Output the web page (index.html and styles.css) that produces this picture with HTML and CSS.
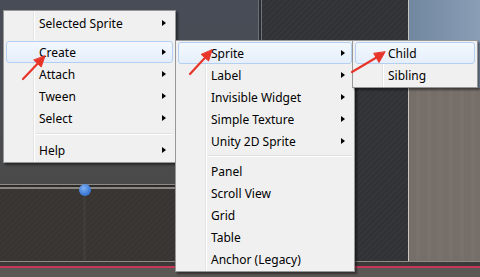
FILE: index.html
```html
<!DOCTYPE html>
<html lang="en">
<head>
    <meta charset="UTF-8">
    <meta name="viewport" content="width=device-width, initial-scale=1.0">
    <title>NGUI Context Menu</title>
    <link rel="stylesheet" href="styles.css">
</head>
<body>

    <div class="scene">

        <!-- Editor background -->
        <div class="upper">
            <div class="editor">
                <div class="scene-view">
                    <div class="scene-top"></div>
                    <div class="scene-rule"></div>
                    <div class="scene-floor">
                        <span class="handle"></span>
                    </div>
                </div>
                <div class="divider"></div>
                <div class="dark-panel"></div>
            </div>
            <div class="side">
                <div class="sky"></div>
                <div class="ground"></div>
            </div>
        </div>
        <div class="timeline">
            <div class="timeline-line"></div>
            <div class="timeline-red"></div>
        </div>

        <!-- Context menu -->
        <div class="menu menu-main">
            <div class="item sub">Selected Sprite</div>
            <div class="gap"></div>
            <div class="item sub active">Create</div>
            <div class="item sub">Attach</div>
            <div class="item sub">Tween</div>
            <div class="item sub">Select</div>
            <div class="sep wide"></div>
            <div class="item sub">Help</div>
        </div>

        <!-- Create submenu -->
        <div class="menu menu-create">
            <div class="item sub active">Sprite</div>
            <div class="item sub">Label</div>
            <div class="item sub">Invisible Widget</div>
            <div class="item sub">Simple Texture</div>
            <div class="item sub">Unity 2D Sprite</div>
            <div class="sep"></div>
            <div class="item">Panel</div>
            <div class="item">Scroll View</div>
            <div class="item">Grid</div>
            <div class="item">Table</div>
            <div class="item">Anchor (Legacy)</div>
        </div>

        <!-- Sprite submenu -->
        <div class="menu menu-sprite">
            <div class="item active">Child</div>
            <div class="item">Sibling</div>
        </div>

        <!-- Red annotation arrows -->
        <svg class="marks" width="480" height="277" viewBox="0 0 480 277">
            <g stroke="#e8352a" stroke-width="2.2" stroke-linecap="round" stroke-linejoin="round" fill="#e8352a">
                <line x1="23" y1="79" x2="38" y2="63.3"/>
                <polygon points="45,56 41.2,67 34,60.2" stroke-width="1"/>
                <line x1="190" y1="74" x2="205" y2="57.8"/>
                <polygon points="212,50 208.6,61 201.4,54.6" stroke-width="1"/>
                <line x1="352" y1="72" x2="376" y2="57.8"/>
                <polygon points="385,52 379,62.5 373.8,53.6" stroke-width="1"/>
            </g>
        </svg>
    </div>

</body>
</html>
```

FILE: styles.css
```css
body {
    margin: 0;
    padding: 0;
    background-color: #3a3a3a;
}

.scene {
    position: relative;
    width: 480px;
    height: 277px;
    overflow: hidden;
    display: flex;
    flex-direction: column;
}

/* Editor background */
.upper {
    display: flex;
    height: 261px;
}

.editor {
    display: flex;
    width: 409px;
}

.scene-view {
    width: 258px;
    display: flex;
    flex-direction: column;
}

.scene-top {
    height: 184px;
    background: linear-gradient(#474c57, #4b4d52 60%, #4a4a4a);
}

.scene-rule {
    height: 5px;
    background: linear-gradient(#8d8a86 0, #8d8a86 1px, #2c2b2a 1px, #2c2b2a 3px, #8a8783 3px, #8a8783 5px);
}

.scene-floor {
    position: relative;
    flex-grow: 1;
    background:
        linear-gradient(to right, transparent 83px, rgba(255,255,255,0.03) 83px, rgba(255,255,255,0.03) 86px, transparent 86px),
        repeating-linear-gradient(135deg, #3a3734 0, #3a3734 2px, #373431 2px, #373431 4px);
}

.handle {
    position: absolute;
    left: 79px;
    top: -5px;
    width: 12px;
    height: 12px;
    border-radius: 50%;
    background: radial-gradient(circle at 40% 35%, #7fb2f2, #3f7bd6 60%, #2d62b8);
}

.divider {
    width: 4px;
    background: linear-gradient(to right, #6c7079 0, #6c7079 1px, #2b2d31 1px, #2b2d31 3px, #70747c 3px);
}

.dark-panel {
    flex-grow: 1;
    border-right: 1px solid #c9c6c2;
    background: repeating-linear-gradient(135deg, #34363a 0, #34363a 2px, #303235 2px, #303235 4px);
}

.side {
    flex-grow: 1;
    display: flex;
    flex-direction: column;
}

.sky {
    height: 88px;
    background: linear-gradient(to right, #71869f, #8a9eb6);
}

.ground {
    flex-grow: 1;
    background: repeating-linear-gradient(to right, #756e69 0, #756e69 7px, #79716c 7px, #79716c 11px);
}

.timeline {
    flex-grow: 1;
    background-color: #5b5754;
}

.timeline-line {
    height: 5px;
    background: linear-gradient(#8e8a86 0, #8e8a86 1px, #3c3a38 1px);
}

.timeline-red {
    height: 2px;
    background-color: #c8375a;
}

/* Menus */
.menu {
    position: absolute;
    box-sizing: border-box;
    padding: 1px 2px;
    background:
        linear-gradient(to right, transparent 29px, #e2e3e3 29px, #e2e3e3 30px, #ffffff 30px, #ffffff 31px, transparent 31px),
        #f0f0f0;
    border: 1px solid #979797;
    box-shadow: 2px 2px 2px rgba(0, 0, 0, 0.45);
    font-family: "Noto Sans", sans-serif;
    font-size: 12px;
    color: #000;
}

.menu-main {
    left: 3px;
    top: 10px;
    width: 173px;
}

.menu-create {
    left: 175px;
    top: 40px;
    width: 180px;
}

.menu-sprite {
    left: 352px;
    top: 40px;
    width: 126px;
}

.item {
    box-sizing: border-box;
    height: 22px;
    display: flex;
    align-items: center;
    padding-left: 32px;
    padding-right: 6px;
    border: 1px solid transparent;
    border-radius: 3px;
    white-space: nowrap;
}

.item.sub::after {
    content: "";
    margin-left: auto;
    border-left: 4px solid #000;
    border-top: 3.5px solid transparent;
    border-bottom: 3.5px solid transparent;
}

.item.active {
    background: linear-gradient(#f3f8fe, #e5eefa);
    border-color: #b3d0f2;
}

.gap {
    height: 7px;
}

.sep {
    height: 1px;
    margin: 3px 0 3px 30px;
    background-color: #e0e0e0;
    border-bottom: 1px solid #ffffff;
}

.sep.wide {
    margin: 4px 0 4px 30px;
}

.marks {
    position: absolute;
    left: 0;
    top: 0;
    pointer-events: none;
}
```
